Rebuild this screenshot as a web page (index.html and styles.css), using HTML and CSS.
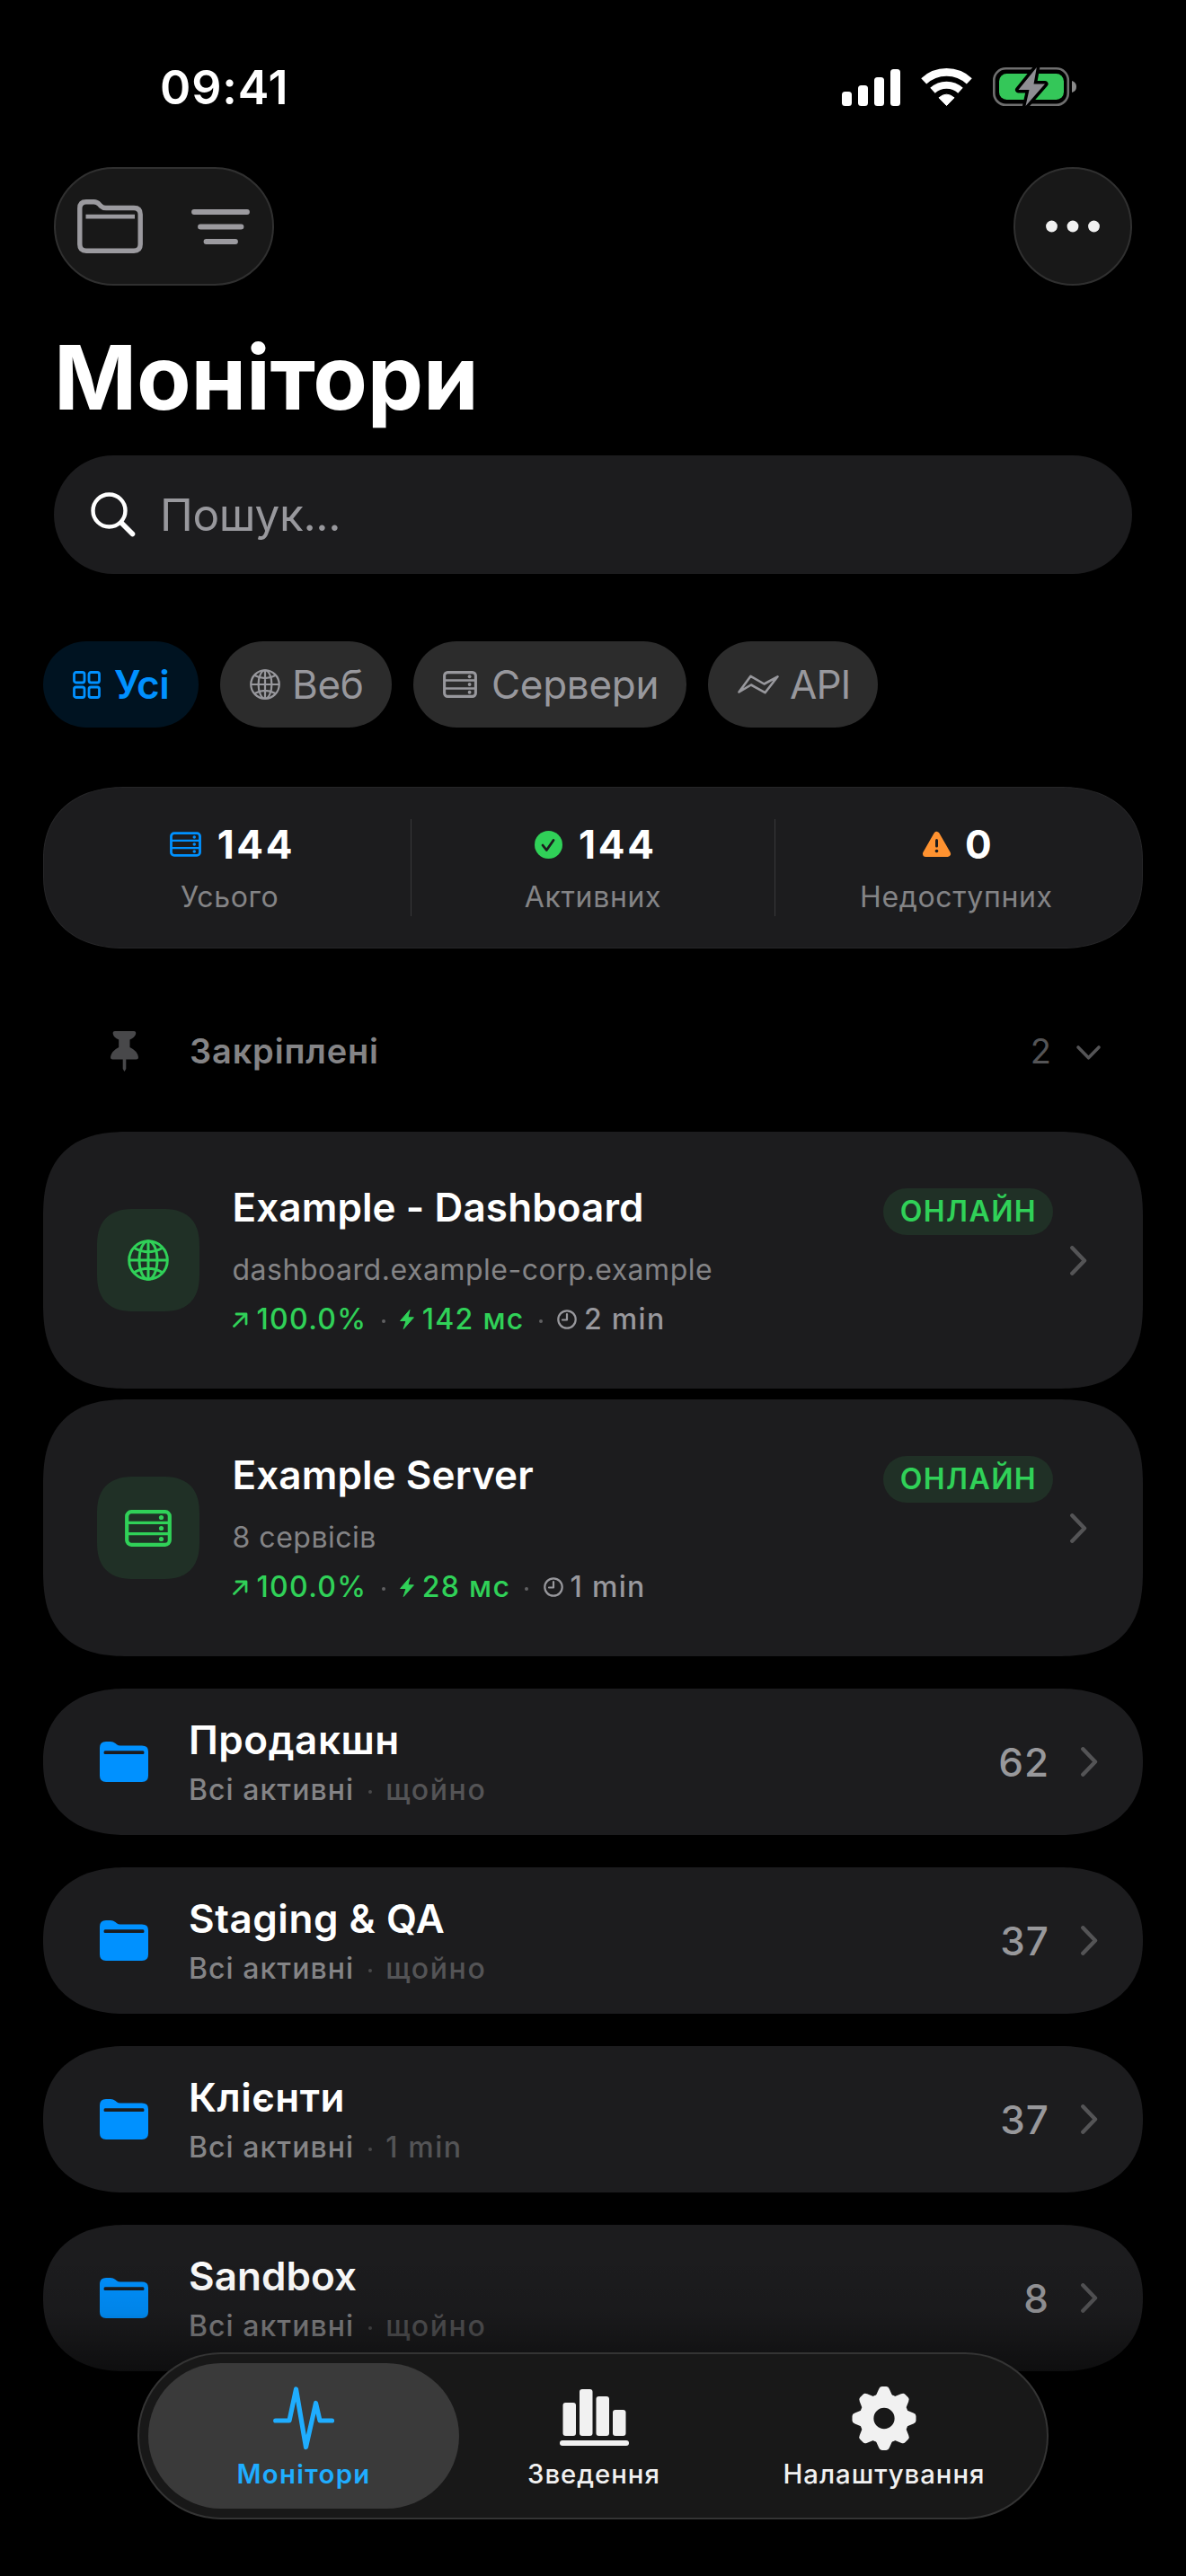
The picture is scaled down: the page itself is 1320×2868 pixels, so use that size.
FILE: index.html
```html
<!DOCTYPE html>
<html lang="uk">
<head>
<meta charset="utf-8">
<title>Монітори</title>
<link rel="stylesheet" href="styles.css">
</head>
<body>
<svg class="defs" aria-hidden="true">
  <symbol id="server" viewBox="0 0 52 41"><rect x="2.2" y="2.2" width="47.6" height="36.6" rx="5" fill="none" stroke="currentColor" stroke-width="4.2"/><path d="M2 14.4H50M2 26.6H50" stroke="currentColor" stroke-width="3.4"/><g fill="currentColor"><circle cx="40.5" cy="8.5" r="2.6"/><circle cx="40.5" cy="20.5" r="2.6"/><circle cx="40.5" cy="32.5" r="2.6"/></g></symbol>
  <symbol id="globe" viewBox="0 0 46 46"><g fill="none" stroke="currentColor" stroke-width="3"><circle cx="23" cy="23" r="21.3"/><path d="M23 2V44M2 23H44M7.5 9.5Q23 18 38.5 9.5M7.5 36.5Q23 28 38.5 36.5"/><ellipse cx="23" cy="23" rx="10" ry="21.3"/></g></symbol>
  <symbol id="folder" viewBox="0 0 54 46"><path fill="currentColor" fill-rule="evenodd" d="M0 7Q0 0 7 0H12Q15 0 17.5 2L19 3.3Q20.5 4.6 23 4.6H47Q54 4.6 54 11V38Q54 45 47 45H7Q0 45 0 38ZM6 10.3Q4.5 10.3 4.5 12.2T6 14.1H48Q49.5 14.1 49.5 12.2T48 10.3Z"/></symbol>
  <symbol id="chev" viewBox="0 0 19 33"><path d="M2.3 2.3L16 16.5L2.3 30.7" fill="none" stroke="currentColor" stroke-width="4.4" stroke-linecap="round" stroke-linejoin="round"/></symbol>
  <symbol id="up" viewBox="0 0 17 17"><path d="M1.5 15.5L14.5 2.5M4 2H15V13" fill="none" stroke="currentColor" stroke-width="2.8" stroke-linecap="round" stroke-linejoin="round"/></symbol>
  <symbol id="bolt" viewBox="0 0 16 22"><path fill="currentColor" stroke="currentColor" stroke-width="1" stroke-linejoin="round" d="M11 .5L.6 12.5H7L4.2 21.5L15.4 8.8H9Z"/></symbol>
  <symbol id="clock" viewBox="0 0 22 22"><g fill="none" stroke="currentColor" stroke-width="2.2"><circle cx="11" cy="11" r="9.7"/><path d="M11 5V11.5H6" stroke-linecap="round" stroke-linejoin="round"/></g></symbol>
</svg>

<div class="status">
  <span class="time">09:41</span>
  <div class="status-icons">
    <svg width="65" height="41" viewBox="0 0 65 41" fill="#fff"><rect y="25" width="11" height="16" rx="3.5"/><rect x="18" y="18" width="11" height="23" rx="3.5"/><rect x="36" y="9" width="11" height="32" rx="3.5"/><rect x="54" width="11" height="41" rx="3.5"/></svg>
    <svg width="57" height="43" viewBox="0 0 57 43" fill="none" stroke="#fff"><path d="M3.2 14.4A37.1 37.1 0 0 1 53.8 14.4" stroke-width="8.7"/><path d="M13 24.8A22.8 22.8 0 0 1 44 24.8" stroke-width="8"/><path d="M28.5 41.5L20 32.8Q28.5 25.5 37 32.8Z" fill="#fff" stroke-width="1" stroke-linejoin="round"/></svg>
    <svg width="94" height="46" viewBox="0 -1 94 46"><rect x="1.3" y="1.3" width="82.5" height="40.5" rx="13" fill="none" stroke="#6f6f6f" stroke-width="2.6"/><rect x="7" y="7" width="72" height="29" rx="8.5" fill="#34c759"/><path d="M88 15Q93 16.5 93 21.5T88 28Z" fill="#8a8a8a"/><path d="M48.8 0L28.5 25H40.5L36.5 43L58 18.5H45.5Z" fill="#8e8e93" stroke="#000" stroke-width="7" stroke-linejoin="round" paint-order="stroke"/></svg>
  </div>
</div>

<div class="toolbar">
  <div class="glass tools">
    <svg width="73" height="60" viewBox="0 0 73 60" fill="none" stroke="#9b9a9f" stroke-width="5.4"><path d="M2.8 10Q2.8 2.8 10 2.8H18.5Q22 2.8 24.5 5.5L26 7.2Q28.5 9.5 32 9.5H63Q70.2 9.5 70.2 16.7V50Q70.2 57.2 63 57.2H10Q2.8 57.2 2.8 50Z"/><path d="M9.5 19.2H64" stroke-width="4.8"/></svg>
    <svg width="65" height="39" viewBox="0 0 65 39" stroke="#9b9a9f" stroke-width="5.8" stroke-linecap="round"><path d="M3 3H62M10 19.5H55.5M16.5 36H49"/></svg>
  </div>
  <div class="glass more"><svg width="60" height="14" viewBox="0 0 60 14" fill="#f1f1f1"><circle cx="6.5" cy="7" r="6.4"/><circle cx="30" cy="7" r="6.4"/><circle cx="53.5" cy="7" r="6.4"/></svg></div>
</div>

<h1 class="title">Монітори</h1>

<div class="search">
  <svg width="50" height="50" viewBox="0 0 50 50" fill="none" stroke="#fff" stroke-linecap="round"><circle cx="20.5" cy="20.5" r="18" stroke-width="4.4"/><path d="M34 34L46.5 46.5" stroke-width="5.6"/></svg>
  <span>Пошук...</span>
</div>

<div class="chips">
  <div class="chip on"><svg width="31" height="31" viewBox="0 0 31 31" fill="none" stroke="currentColor" stroke-width="2.8"><rect x="1.5" y="1.5" width="11.5" height="11.5" rx="2.2"/><rect x="18" y="1.5" width="11.5" height="11.5" rx="2.2"/><rect x="1.5" y="18" width="11.5" height="11.5" rx="2.2"/><rect x="18" y="18" width="11.5" height="11.5" rx="2.2"/></svg><span>Усі</span></div>
  <div class="chip web"><svg width="34" height="34"><use href="#globe"/></svg><span>Веб</span></div>
  <div class="chip srv"><svg width="38" height="30"><use href="#server"/></svg><span>Сервери</span></div>
  <div class="chip api"><svg width="46" height="22" viewBox="0 0 46 22" fill="none" stroke="currentColor" stroke-width="2.6" stroke-linejoin="round"><path d="M1.5 19.5L14.5 1.8L29.5 10.5L44.5 2.3L30.5 20.2L15 11.5Z"/></svg><span>API</span></div>
</div>

<div class="stats">
  <div class="stat"><div class="num wide"><svg class="blue" width="35" height="28"><use href="#server"/></svg><b>144</b></div><div class="lbl">Усього</div></div>
  <div class="stat"><div class="num wide"><svg width="31" height="31" viewBox="0 0 31 31"><circle cx="15.5" cy="15.5" r="15.5" fill="#30d158"/><path d="M9 16L13.3 21.5L21 10.5" fill="none" stroke="#1c1c1e" stroke-width="2.8" stroke-linecap="round" stroke-linejoin="round"/></svg><b>144</b></div><div class="lbl">Активних</div></div>
  <div class="stat"><div class="num"><svg width="31" height="28" viewBox="0 0 31 28"><path d="M15.5 3.5L27.5 24.5H3.5Z" fill="#ff9230" stroke="#ff9230" stroke-width="7" stroke-linejoin="round"/><path d="M15.5 9.5V16" stroke="#1c1c1e" stroke-width="3" stroke-linecap="round"/><circle cx="15.5" cy="21.5" r="1.8" fill="#1c1c1e"/></svg><b>0</b></div><div class="lbl">Недоступних</div></div>
</div>

<div class="section">
  <svg class="pin" width="31" height="45" viewBox="0 0 31 45"><path fill="currentColor" d="M5 0H26Q28.5 0 28.2 3Q27 7 21.5 9.5V18Q30 22 31 29Q31 31.5 28.5 31.5H17.3V42L15.5 45L13.7 42V31.5H2.5Q0 31.5 0 29Q1 22 9.2 18V9.5Q3.5 7 2.7 3Q2.3 0 5 0Z"/></svg>
  <span class="section-name">Закріплені</span>
  <span class="section-count">2</span>
  <svg class="down" width="27" height="16" viewBox="0 0 27 16"><path d="M2 2L13.5 13.8L25 2" fill="none" stroke="currentColor" stroke-width="3.6" stroke-linecap="round" stroke-linejoin="round"/></svg>
</div>

<div class="card">
  <div class="tile"><svg width="46" height="46"><use href="#globe"/></svg></div>
  <div class="info">
    <div class="name">Example - Dashboard</div>
    <div class="host">dashboard.example-corp.example</div>
    <div class="metrics"><svg class="up" width="17" height="17"><use href="#up"/></svg><span>100.0%</span><i></i><svg class="blt" width="16" height="22"><use href="#bolt"/></svg><span>142 мс</span><i></i><svg class="clk" width="22" height="22"><use href="#clock"/></svg><span class="ago">2 min</span></div>
  </div>
  <div class="badge">ОНЛАЙН</div>
  <svg class="chev" width="19" height="33"><use href="#chev"/></svg>
</div>
<div class="card">
  <div class="tile"><svg width="52" height="41"><use href="#server"/></svg></div>
  <div class="info">
    <div class="name">Example Server</div>
    <div class="host">8 сервісів</div>
    <div class="metrics"><svg class="up" width="17" height="17"><use href="#up"/></svg><span>100.0%</span><i></i><svg class="blt" width="16" height="22"><use href="#bolt"/></svg><span>28 мс</span><i></i><svg class="clk" width="22" height="22"><use href="#clock"/></svg><span class="ago">1 min</span></div>
  </div>
  <div class="badge">ОНЛАЙН</div>
  <svg class="chev" width="19" height="33"><use href="#chev"/></svg>
</div>

<div class="rows">
  <div class="row"><svg class="fold" width="54" height="46"><use href="#folder"/></svg><div class="rinfo"><div class="rname">Продакшн</div><div class="rsub"><span>Всі активні</span><i></i><em>щойно</em></div></div><span class="count">62</span><svg class="chev" width="19" height="33"><use href="#chev"/></svg></div>
  <div class="row"><svg class="fold" width="54" height="46"><use href="#folder"/></svg><div class="rinfo"><div class="rname">Staging &amp; QA</div><div class="rsub"><span>Всі активні</span><i></i><em>щойно</em></div></div><span class="count">37</span><svg class="chev" width="19" height="33"><use href="#chev"/></svg></div>
  <div class="row"><svg class="fold" width="54" height="46"><use href="#folder"/></svg><div class="rinfo"><div class="rname">Клієнти</div><div class="rsub"><span>Всі активні</span><i></i><em>1 min</em></div></div><span class="count">37</span><svg class="chev" width="19" height="33"><use href="#chev"/></svg></div>
  <div class="row"><svg class="fold" width="54" height="46"><use href="#folder"/></svg><div class="rinfo"><div class="rname tight">Sandbox</div><div class="rsub"><span>Всі активні</span><i></i><em>щойно</em></div></div><span class="count">8</span><svg class="chev" width="19" height="33"><use href="#chev"/></svg></div>
</div>

<div class="fade"></div>
<nav class="tabs">
  <div class="tab active"><svg width="68" height="71" viewBox="0 0 68 71"><path d="M2.7 38H18L25.5 3L36.5 67.5L47.5 18.5L52 38H65.5" fill="none" stroke="currentColor" stroke-width="5.2" stroke-linecap="round" stroke-linejoin="round"/></svg><span>Монітори</span></div>
  <div class="tab"><svg width="77" height="71" viewBox="0 0 77 71" fill="currentColor"><rect x="3.5" y="18" width="14.5" height="37" rx="3"/><rect x="22" y="3" width="14.5" height="52" rx="3"/><rect x="40.5" y="11" width="14.5" height="44" rx="3"/><rect x="59" y="26" width="14.5" height="29" rx="3"/><rect y="60" width="77" height="6" rx="3"/></svg><span>Зведення</span></div>
  <div class="tab"><svg width="72" height="72" viewBox="0 0 72 72"><defs><path id="tooth" d="M26.5 11L30 3Q31 0 33.5 0H38.5Q41 0 42 3L45.5 11Z"/></defs><g fill="currentColor"><circle cx="36" cy="36" r="19.8" fill="none" stroke="currentColor" stroke-width="16"/><use href="#tooth"/><use href="#tooth" transform="rotate(45 36 36)"/><use href="#tooth" transform="rotate(90 36 36)"/><use href="#tooth" transform="rotate(135 36 36)"/><use href="#tooth" transform="rotate(180 36 36)"/><use href="#tooth" transform="rotate(225 36 36)"/><use href="#tooth" transform="rotate(270 36 36)"/><use href="#tooth" transform="rotate(315 36 36)"/></g></svg><span>Налаштування</span></div>
</nav>
</body>
</html>
```
FILE: styles.css
```css
* { box-sizing: border-box; margin: 0; padding: 0; }
html { background: #000; }
body { position: relative; width: 1320px; height: 2868px; overflow: hidden; background: #000; color: #fff; font-family: Inter, "Noto Sans", sans-serif; display: flex; flex-direction: column; }
svg { display: block; flex: none; overflow: visible; }
span, b, em { white-space: nowrap; font-style: normal; }
.defs { position: absolute; width: 0; height: 0; }

.status { height: 186px; padding: 68px 121px 0 178px; display: flex; justify-content: space-between; align-items: flex-start; }
.time { font-size: 52px; line-height: 60px; font-weight: 600; letter-spacing: .84px; }
.status-icons { display: flex; gap: 23px; align-items: center; padding-top: 6px; }

.toolbar { height: 132px; padding: 0 60px; display: flex; justify-content: space-between; }
.glass { height: 132px; border-radius: 66px; background: #181818; border: 2px solid #303030; display: flex; align-items: center; }
.tools { width: 245px; padding: 0 25px 0 24px; justify-content: space-between; }
.more { width: 132px; justify-content: center; }

.title { margin: 40px 60px 0; height: 124px; line-height: 124px; font-size: 99px; font-weight: 700; letter-spacing: -.23px; }

.search { margin: 25px 60px 0; height: 132px; flex: none; border-radius: 66px; background: #1c1c1e; color: #98989d; display: flex; align-items: center; padding-left: 41px; gap: 27px; font-size: 49.5px; line-height: 60px; letter-spacing: -.34px; }

.chips { margin: 75px 48px 0; display: flex; gap: 24px; }
.chip { height: 96px; border-radius: 48px; background: #2c2c2c; color: #98989d; display: flex; align-items: center; font-size: 44px; line-height: 56px; letter-spacing: -.3px; width: 191px; padding-left: 33px; gap: 13px; }
.chip.on { width: 173px; background: #001321; color: #0091ff; font-weight: 600; gap: 15px; }
.chip.srv { width: 304px; gap: 16px; }
.chip.api { width: 189px; gap: 12px; letter-spacing: -.98px; }

.stats { margin: 66px 48px 0; height: 180px; flex: none; border-radius: 78px; background: #1c1c1e; border: 1px solid #262628; padding: 35px 5px; display: flex; }
.stat { flex: 1; padding-top: 1px; border-left: 1px solid #38383a; }
.stat:first-child { border-left: 0; }
.num { height: 54px; display: flex; align-items: center; justify-content: center; gap: 16px; font-size: 44px; line-height: 54px; padding-left: 2px; }
.num.wide { gap: 18px; padding-left: 3px; }
.num b { font-weight: 700; letter-spacing: 2.7px; margin-right: -2.7px; }
.lbl { margin-top: 12px; text-align: center; font-size: 32px; line-height: 40px; letter-spacing: .65px; color: #848486; }
.blue { color: #0091ff; }

.section { margin-top: 54px; height: 120px; flex: none; padding: 0 95px 0 123px; display: flex; align-items: center; font-size: 38px; line-height: 48px; }
.pin { color: #48484a; }
.section-name { margin-left: 57px; flex: 1; font-weight: 600; letter-spacing: .83px; color: #848486; }
.section-count, .down { color: #545456; }
.down { margin-left: 28px; margin-top: 4px; }

.card { margin: 30px 48px 0; height: 286px; flex: none; border-radius: 78px; background: #1c1c1e; display: flex; padding-left: 60px; }
.card + .card { margin-top: 12px; }
.tile { width: 114px; height: 114px; margin-top: 86px; border-radius: 34px; background: #203026; color: #30d158; display: flex; align-items: center; justify-content: center; }
.info { margin-left: 36.5px; padding-top: 57px; flex: 1; }
.name { font-size: 44px; line-height: 54px; font-weight: 600; letter-spacing: .1px; }
.host { margin-top: 19px; font-size: 32px; line-height: 48px; letter-spacing: .52px; color: #848486; }
.metrics { margin-top: 11px; height: 40px; display: flex; align-items: center; font-size: 32px; line-height: 40px; font-weight: 500; letter-spacing: 1.3px; color: #30d158; }
.metrics i, .rsub i { width: 4px; height: 4px; border-radius: 2px; background: #606062; margin: 4px 15.5px 0; }
.metrics i { margin-left: 16.2px; margin-right: 16.2px; }
.metrics .up { margin-right: 10px; margin-left: 0; }
.metrics .blt { margin-right: 9px; }
.metrics .clk { margin-right: 8px; color: #98989d; }
.metrics .ago { color: #98989d; }
.badge { margin-top: 63px; width: 189px; height: 52px; border-radius: 26px; background: #203026; color: #30d158; text-align: center; font-size: 32px; line-height: 52px; font-weight: 600; letter-spacing: 1.4px; text-indent: 1px; }
.chev { color: #545456; align-self: center; }
.card .chev { margin: 0 62px 0 19px; }

.rows { margin: 36px 48px 0; display: flex; flex-direction: column; gap: 36px; }
.row { height: 163px; flex: none; border-radius: 78px; background: #1c1c1e; display: flex; align-items: center; padding: 0 50px 0 63px; }
.fold { color: #0091ff; }
.rinfo { margin-left: 45px; flex: 1; }
.rname { font-size: 44px; line-height: 56px; font-weight: 600; letter-spacing: .55px; margin-top: -2px; }
.rname.tight { letter-spacing: .07px; }
.rsub { margin-top: 8px; display: flex; align-items: center; font-size: 32px; line-height: 40px; font-weight: 500; letter-spacing: 1.05px; color: #848486; }
.rsub i { background: #48484a; }
.rsub em { color: #545456; font-weight: 500; letter-spacing: 1.6px; }
.count { font-size: 44px; line-height: 56px; font-weight: 500; letter-spacing: 1px; color: #98989b; margin-right: 35px; }

.fade { position: absolute; left: 0; right: 0; top: 2510px; height: 130px; background: linear-gradient(rgba(0,0,0,0), rgba(0,0,0,.09) 50%, rgba(0,0,0,.22) 68%, rgba(0,0,0,.5)); }

.tabs { position: absolute; left: 153px; top: 2619px; width: 1014px; height: 186px; border-radius: 93px; background: #181818; border: 2px solid #343434; padding: 10px; display: flex; color: #f1f1f1; }
.tab { width: 346px; height: 162px; border-radius: 81px; flex: none; padding-top: 26px; display: flex; flex-direction: column; align-items: center; }
.tab + .tab { margin-left: -23px; }
.tab svg { height: 71px; }
.tab span { margin-top: 9px; font-size: 29.3px; line-height: 36px; font-weight: 500; letter-spacing: 1px; }
.tab.active { background: #3a3a3a; color: #1fadff; }
.tab.active span { font-weight: 600; letter-spacing: 1.35px; }

@supports (corner-shape: superellipse(1.3)) {
  .card { border-radius: 95px; corner-shape: superellipse(1.34); }
  .stats, .row { border-radius: 92px / 81px; corner-shape: superellipse(1.18); }
  .tile { border-radius: 42px; corner-shape: superellipse(1.34); }
}
```
